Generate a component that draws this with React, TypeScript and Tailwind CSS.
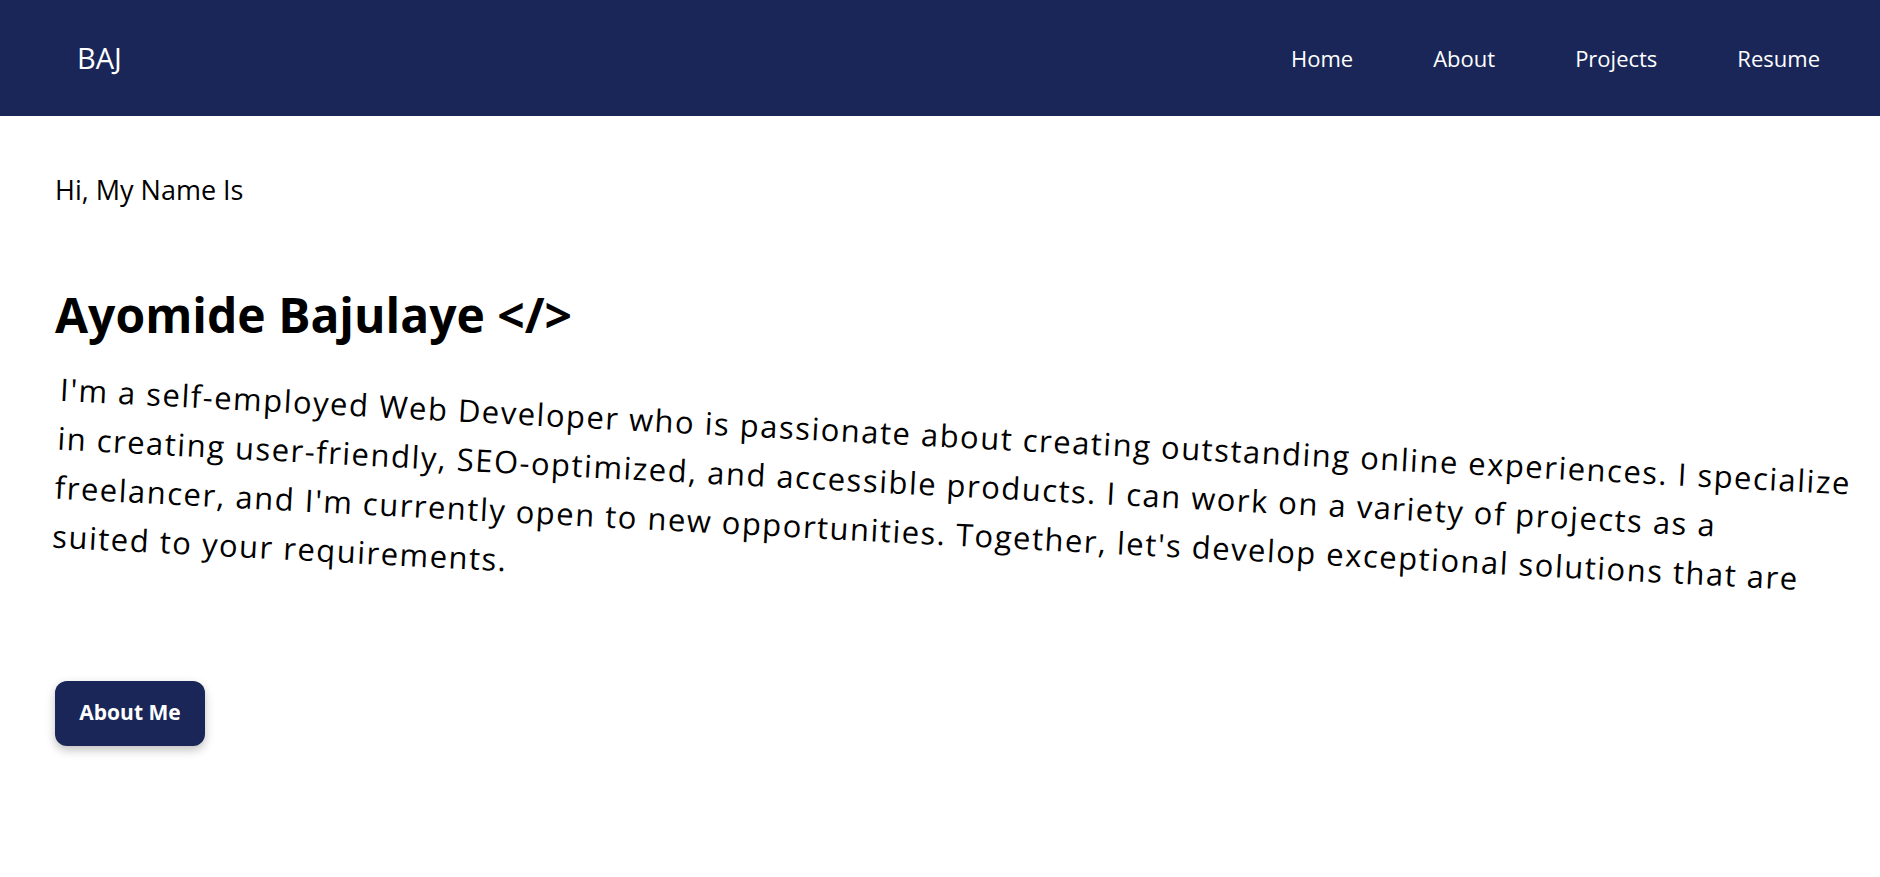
export default function App() {
  const links = ["Home", "About", "Projects", "Resume"];

  return (
    <div className="min-h-screen bg-white font-['Open_Sans','Noto_Sans',sans-serif] text-black">
      {/* Nav */}
      <nav className="flex h-[116px] items-center justify-between bg-[#192657] pl-[77px] pr-[60px] text-white">
        <span className="text-[29px] font-medium">BAJ</span>
        <ul className="flex items-center gap-[80px] text-[22px]">
          {links.map((l) => (
            <li key={l}>
              <a href="#">{l}</a>
            </li>
          ))}
        </ul>
      </nav>

      {/* Hero */}
      <main className="px-[55px] pt-[54px]">
        <p className="text-[27px]">Hi, My Name Is</p>
        <h1 className="mt-[80px] text-[48px] font-bold leading-none">Ayomide Bajulaye &lt;/&gt;</h1>
        <p className="mt-[73px] w-[1812px] rotate-3 text-[31px] leading-[49px] tracking-[1.5px]">
          I'm a self-employed Web Developer who is passionate about creating outstanding online experiences. I specialize
          in creating user-friendly, SEO-optimized, and accessible products. I can work on a variety of projects as a
          freelancer, and I'm currently open to new opportunities. Together, let's develop exceptional solutions that are
          suited to your requirements.
        </p>
        <button className="mt-[73px] h-[65px] w-[150px] rounded-xl bg-[#192657] text-[21px] font-bold text-white shadow-[0_4px_10px_rgba(0,0,0,0.25)]">
          About Me
        </button>
      </main>
    </div>
  );
}
